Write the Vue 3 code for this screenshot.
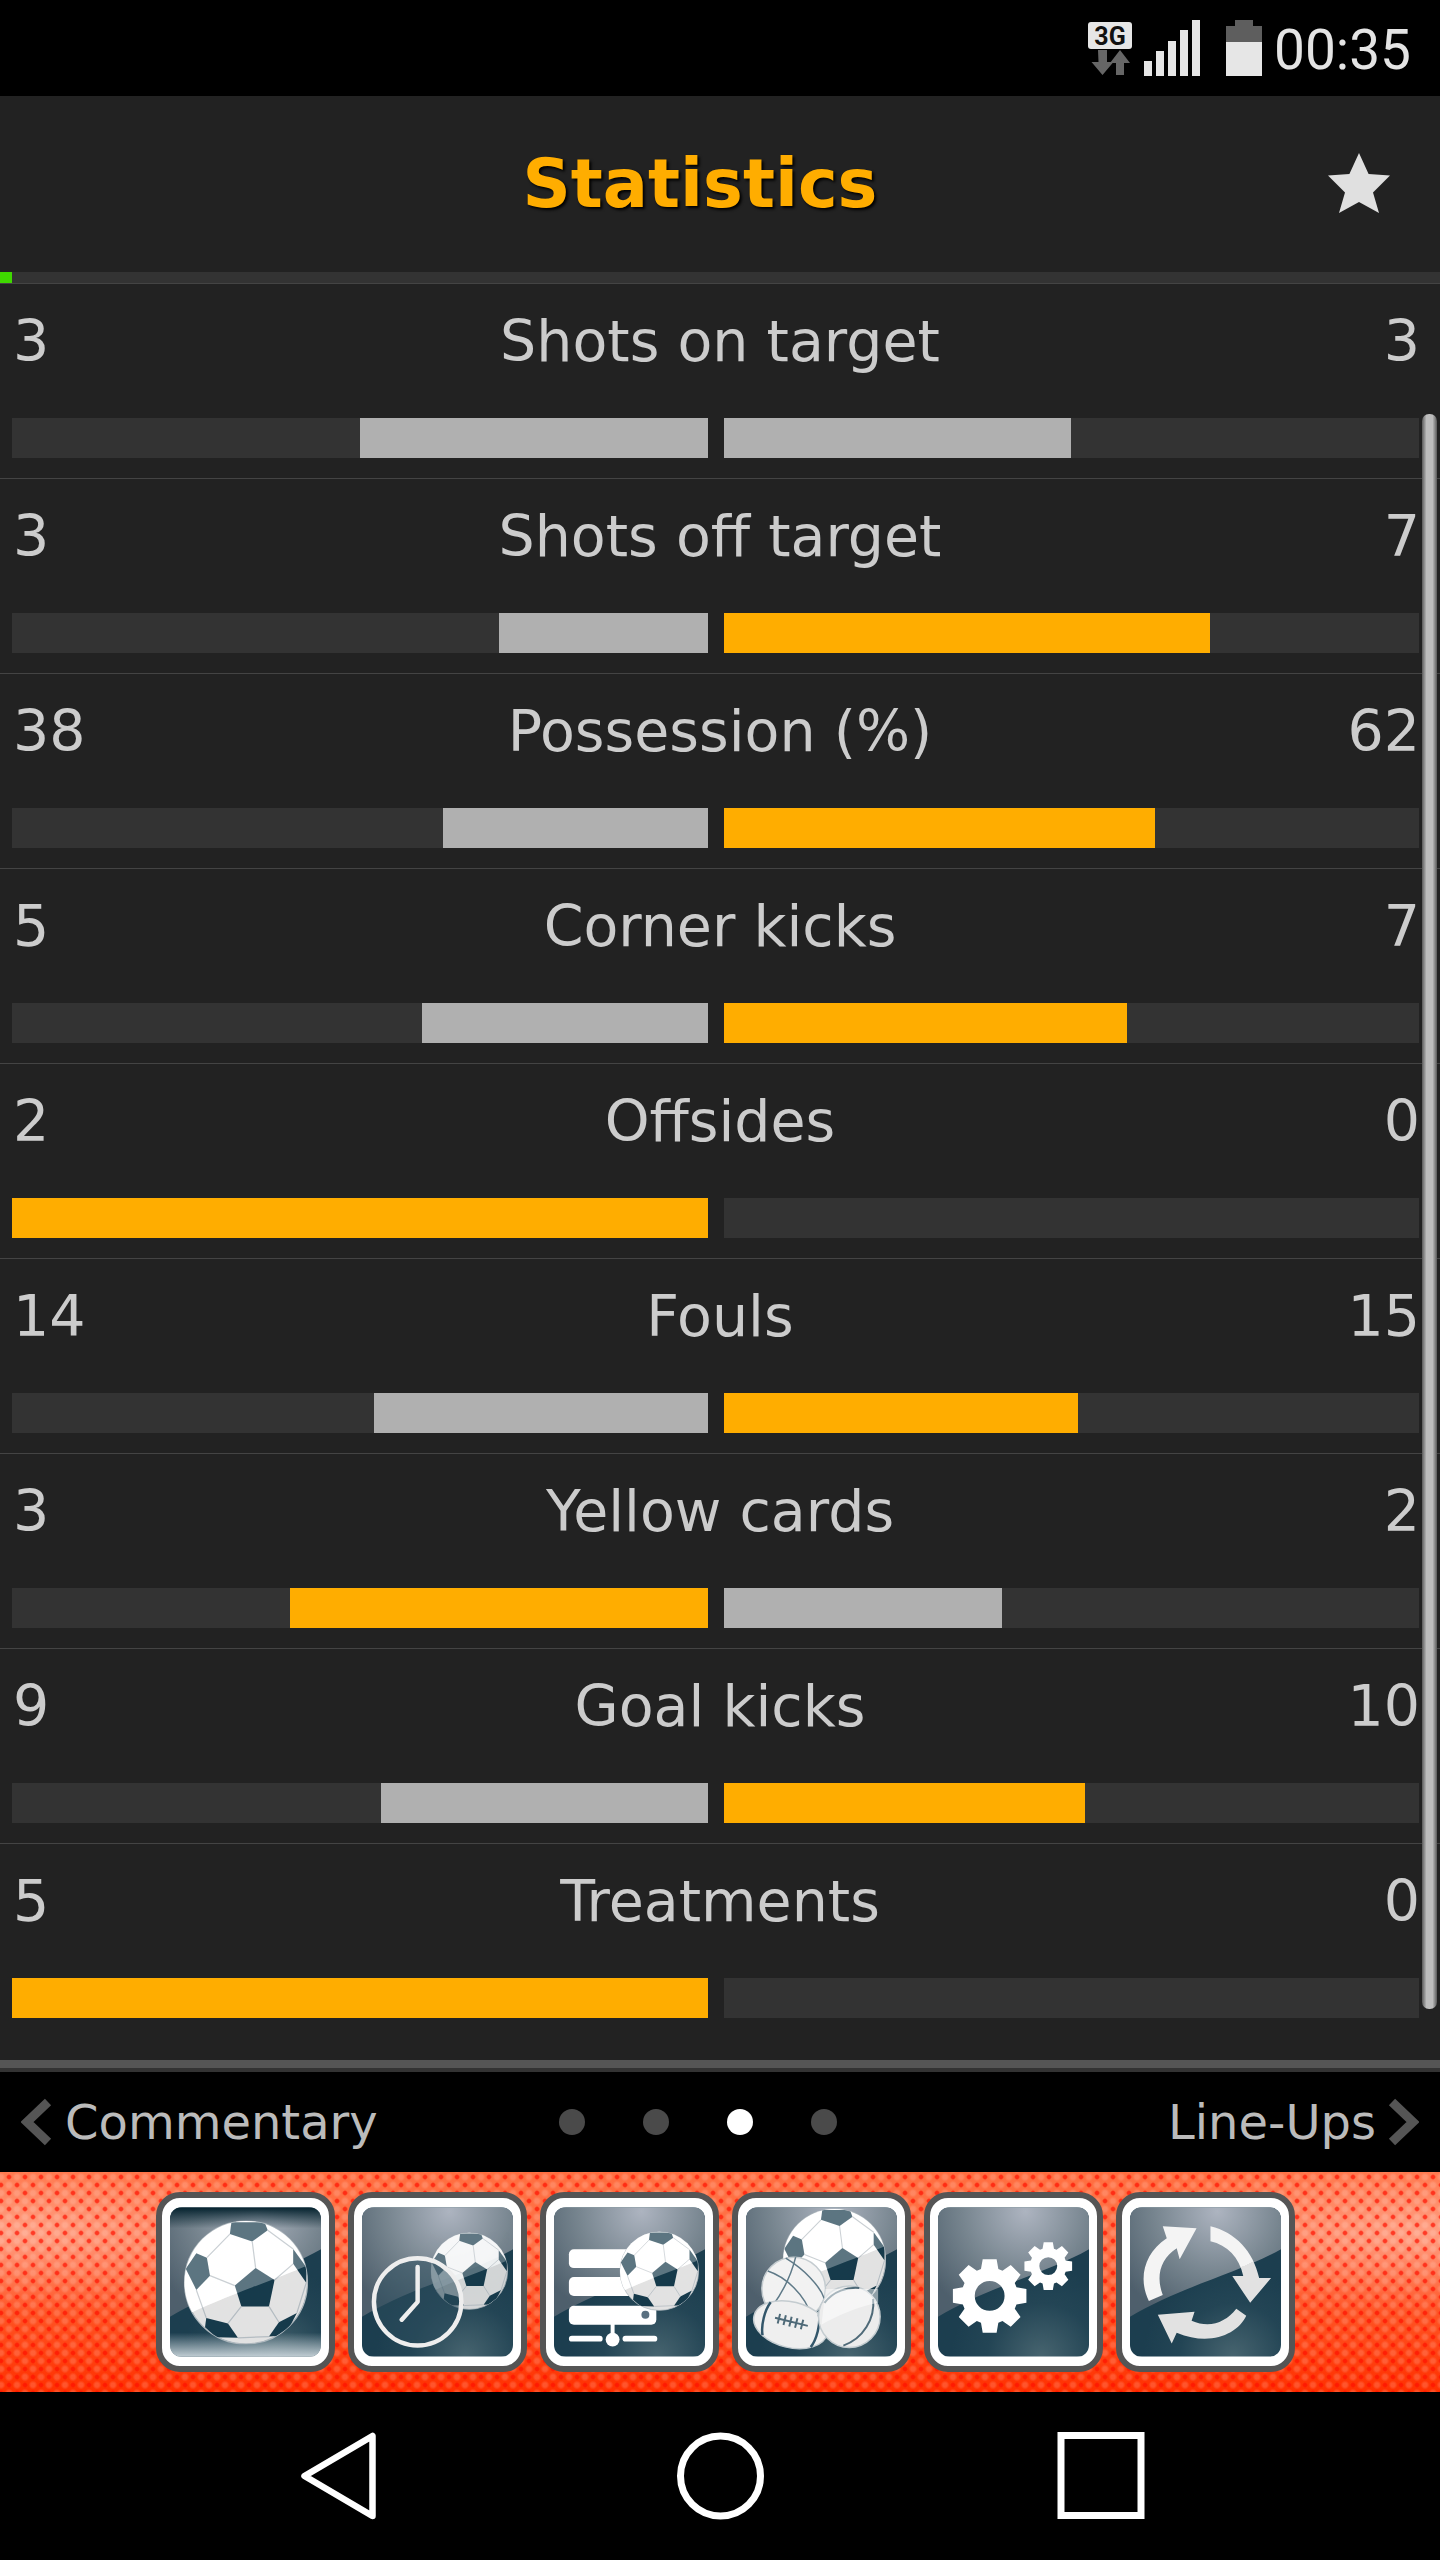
<script setup>
const stats = [
  { label: 'Shots on target', a: 3, b: 3 },
  { label: 'Shots off target', a: 3, b: 7 },
  { label: 'Possession (%)', a: 38, b: 62 },
  { label: 'Corner kicks', a: 5, b: 7 },
  { label: 'Offsides', a: 2, b: 0 },
  { label: 'Fouls', a: 14, b: 15 },
  { label: 'Yellow cards', a: 3, b: 2 },
  { label: 'Goal kicks', a: 9, b: 10 },
  { label: 'Treatments', a: 5, b: 0 }
]
const pct = (v, s) => Math.floor((v / (s.a + s.b)) * 100) + '%'
const cls = (v, o) => (v > o ? 'fill hi' : 'fill lo')
const panels = ['ball', 'clock', 'list', 'balls', 'gears', 'refresh']

function gear(cx, cy, R, r, hole, halfTooth, teeth = 8) {
  let d = ''
  for (let i = 0; i < teeth; i++) {
    const a = (i / teeth) * Math.PI * 2 - Math.PI / 2
    const ca = Math.cos(a)
    const sa = Math.sin(a)
    const pt = (rad, off) => `${(cx + rad * ca - off * sa).toFixed(2)} ${(cy + rad * sa + off * ca).toFixed(2)}`
    d += `${i ? 'L' : 'M'}${pt(r, -halfTooth * 1.25)}L${pt(R, -halfTooth)}L${pt(R, halfTooth)}L${pt(r, halfTooth * 1.25)}`
  }
  d += `Z M${cx - hole} ${cy}a${hole} ${hole} 0 1 0 ${hole * 2} 0a${hole} ${hole} 0 1 0 ${-hole * 2} 0Z`
  return d
}
const bigGear = gear(52, 89, 37, 27, 15, 7)
const smallGear = gear(111, 59, 24, 17.5, 9, 4.6)
</script>

<template>
  <div class="screen">
    <svg class="defs" width="0" height="0" aria-hidden="true">
      <defs>
        <radialGradient id="upperFill" gradientUnits="userSpaceOnUse" cx="88" cy="4" r="115">
          <stop offset="0" stop-color="#adb4c0" />
          <stop offset="0.55" stop-color="#77858f" />
          <stop offset="1" stop-color="#4e5f6c" />
        </radialGradient>
        <radialGradient id="lowerFill" gradientUnits="userSpaceOnUse" cx="104" cy="150" r="90">
          <stop offset="0" stop-color="#47646f" />
          <stop offset="0.6" stop-color="#234555" />
          <stop offset="1" stop-color="#1c3e4f" />
        </radialGradient>
        <linearGradient id="selTop" x1="0" y1="0" x2="0" y2="1">
          <stop offset="0" stop-color="#04222e" />
          <stop offset="0.14" stop-color="#04222e" stop-opacity="0" />
          <stop offset="0.84" stop-color="#c0ccd2" stop-opacity="0" />
          <stop offset="1" stop-color="#c0ccd2" />
        </linearGradient>
        <linearGradient id="split" gradientUnits="userSpaceOnUse" x1="42" y1="0" x2="110" y2="152">
          <stop offset="0.5" stop-color="#f4f4f4" />
          <stop offset="0.5" stop-color="#e2e2e2" />
        </linearGradient>
        <clipPath id="ballClip"><circle cx="0" cy="0" r="99" /></clipPath>
        <symbol id="ball" viewBox="-100 -100 200 200">
          <circle r="99" fill="#e2e2e2" stroke="#aeb8be" stroke-width="2" />
          <g clip-path="url(#ballClip)">
            <path d="M-100 -100H100V-28C40 -2 -50 28 -100 55Z" fill="#fff" />
            <g fill="#163a4b">
              <polygon points="-18,5 15.5,-23.5 46,-4 37,38.5 -7.5,38.5" />
              <polygon points="-23.5,-97 30,-97 35,-84 10,-66 -26,-78" />
              <polygon points="-97,-22 -80,-47 -63,-40 -58,-11 -80,12" />
              <polygon points="76,-30 97,0.5 97,-25 76,-54" />
              <polygon points="-64,57 -29,66 -13,89 -48,88 -66,72" />
              <polygon points="37,87 53,64 82,49 70,72 49,86" />
            </g>
            <g stroke="#b4bcc2" stroke-width="2" fill="none">
              <path d="M-18 5L-58 -11M15.5 -23.5L10 -66M46 -4L76 -30M37 38.5L53 64M-7.5 38.5L-29 66M-26 -78L-63 -40M35 -84L76 -54M-80 12L-64 57M-13 89L37 87M82 49L97 0.5" />
            </g>
            <path d="M-100 -100H100V-28C40 -2 -50 28 -100 55Z" fill="#fff" opacity="0.3" />
          </g>
        </symbol>
      </defs>
    </svg>

    <div class="status">
      <svg class="sicons" width="176" height="96" viewBox="0 0 176 96">
        <rect x="1" y="22" width="44" height="27" rx="3" fill="#e6e6e6" />
        <text x="23" y="45" text-anchor="middle" class="tg">3G</text>
        <path d="M8 50h9v12h6.500l-11 13-11-13h7z" transform="translate(3 0)" fill="#666" />
        <path d="M33 50l10 13h-6v12h-8V63h-6z" fill="#666" />
        <g fill="#e6e6e6">
          <rect x="57" y="61" width="8" height="15" />
          <rect x="69" y="51" width="8" height="25" />
          <rect x="81" y="41" width="8" height="35" />
          <rect x="93" y="30" width="8" height="46" />
          <rect x="105" y="20" width="8" height="56" />
          <rect x="139" y="42" width="36" height="34" />
        </g>
        <path d="M148 20h18v6h9v16h-36V26h9z" fill="#5e5e5e" />
      </svg>
      <span class="clock">00:35</span>
    </div>

    <div class="head">
      <span></span>
      <h1>Statistics</h1>
      <svg class="star" width="62" height="60" viewBox="0 0 62 60">
        <path d="M31 0l9.600 21L62 22.500 45 39.500 51 60 31 49 11 60l6-20.500L0 22.500 21.400 21z" fill="#e0e0e0" />
      </svg>
    </div>
    <div class="prog"><i></i></div>

    <div class="list">
      <div v-for="s in stats" :key="s.label" class="row">
        <div class="nums">
          <span class="na">{{ s.a }}</span>
          <span>{{ s.label }}</span>
          <span class="nb">{{ s.b }}</span>
        </div>
        <div class="bars">
          <div class="track l"><div :class="cls(s.a, s.b)" :style="{ width: pct(s.a, s) }"></div></div>
          <div class="track"><div :class="cls(s.b, s.a)" :style="{ width: pct(s.b, s) }"></div></div>
        </div>
      </div>
      <div class="scroll"></div>
    </div>
    <div class="rule"></div>

    <div class="pager">
      <div class="pleft">
        <svg width="31" height="48" viewBox="0 0 31 48"><path d="M27 4L6 24l21 20" fill="none" stroke="#555" stroke-width="9" /></svg>
        <span>Commentary</span>
      </div>
      <div class="dots"><i></i><i></i><i class="on"></i><i></i></div>
      <div class="pright">
        <span>Line-Ups</span>
        <svg width="31" height="48" viewBox="0 0 31 48"><path d="M4 4l21 20L4 44" fill="none" stroke="#555" stroke-width="9" /></svg>
      </div>
    </div>

    <div class="dock">
      <div v-for="p in panels" :key="p" class="btn">
        <svg class="panel" width="151" height="150" viewBox="0 0 152 150">
          <rect width="152" height="150" fill="url(#lowerFill)" />
          <path d="M0 0H152V42C110 66 50 80 0 110Z" fill="url(#upperFill)" />

          <template v-if="p === 'ball'">
            <rect width="152" height="150" fill="url(#selTop)" />
            <use href="#ball" x="14" y="13" width="125" height="125" />
          </template>

          <template v-else-if="p === 'clock'">
            <use href="#ball" x="69" y="25" width="78" height="78" opacity="0.92" />
            <circle cx="56" cy="95" r="44" fill="#2c4c5c" fill-opacity="0.55" stroke="#eee" stroke-width="4.500" />
            <path d="M56 60V95L40 113" fill="none" stroke="#eee" stroke-width="4.500" stroke-linecap="round" stroke-linejoin="round" />
          </template>

          <template v-else-if="p === 'list'">
            <g fill="#fff">
              <rect x="15" y="42" width="80" height="19" rx="5" />
              <rect x="15" y="70" width="80" height="19" rx="5" />
              <rect x="15" y="99" width="88" height="19" rx="5" />
              <rect x="57" y="116" width="4" height="14" />
              <circle cx="59" cy="133" r="7" />
              <rect x="15" y="129" width="34" height="6" rx="3" />
              <rect x="69" y="129" width="35" height="6" rx="3" />
            </g>
            <circle cx="92" cy="108" r="4" fill="#5a7080" />
            <use href="#ball" x="66" y="24" width="80" height="80" />
          </template>

          <template v-else-if="p === 'balls'">
            <use href="#ball" x="37" y="1" width="104" height="104" />
            <circle cx="48" cy="82" r="32" fill="#f2f2f2" stroke="#c4ccd0" stroke-width="1.500" />
            <g fill="none" stroke="#5f7a88" stroke-width="1.500">
              <path d="M22 64C40 70 60 88 66 110" />
              <path d="M40 51C58 62 74 78 79 92" />
              <path d="M26 100C38 84 46 66 50 50" />
            </g>
            <g transform="rotate(14 45 118)">
              <ellipse cx="45" cy="118" rx="38" ry="23" fill="#efefef" stroke="#c4ccd0" stroke-width="1.500" />
              <path d="M20 101C16 110 16 126 20 135M70 101C74 110 74 126 70 135" fill="none" stroke="#33566a" stroke-width="2.500" />
              <path d="M28 115H62M32 110V120M38 110V120M44 110V120M50 110V120M56 110V120" fill="none" stroke="#4f6a78" stroke-width="2" />
            </g>
            <circle cx="104" cy="110" r="31" fill="#ececec" stroke="#c4ccd0" stroke-width="1.500" />
            <path d="M79 96C88 84 102 80 114 81M128 92C130 112 118 132 98 139" fill="none" stroke="#4f6a78" stroke-width="2" />
            <path d="M76 118C90 110 112 100 133 96V82H80Z" fill="#fff" opacity="0.5" />
          </template>

          <template v-else-if="p === 'gears'">
            <path :d="bigGear" fill="#fff" fill-rule="evenodd" />
            <path :d="smallGear" fill="#fff" fill-rule="evenodd" />
          </template>

          <template v-else>
            <g fill="url(#split)">
              <path d="M19 94C8 72 14 46 37 31L33 19L67 21L50 52L47 41C30 52 26 70 33 88Z" />
              <path d="M81 19C106 25 124 44 130 71H142L121 96L103 69H114C110 50 98 38 81 34Z" />
              <path d="M117 109C108 128 80 140 47 126L42 137L28 108L65 105L62 114C80 122 96 116 107 102Z" />
            </g>
          </template>
        </svg>
      </div>
    </div>

    <div class="nav">
      <svg width="1440" height="168" viewBox="0 0 1440 168">
        <path d="M372.500 44V124L304.500 84Z" fill="none" stroke="#fff" stroke-width="6.500" stroke-linejoin="round" />
        <circle cx="720.500" cy="84" r="40" fill="none" stroke="#fff" stroke-width="7" />
        <rect x="1061" y="43.500" width="80" height="80" fill="none" stroke="#fff" stroke-width="7" />
      </svg>
    </div>
  </div>
</template>

<style>
body { background: #000; }
</style>
<style scoped>
.screen { position: relative; width: 1440px; height: 2560px; background: #222; font-family: "DejaVu Sans", sans-serif; color: #ccc; display: flex; flex-direction: column; overflow: hidden; }
.defs { position: absolute; }
.status { height: 96px; flex: none; background: #000; display: flex; justify-content: flex-end; align-items: center; padding-right: 29px; gap: 11px; }
.tg { font: bold 25px Roboto, sans-serif; fill: #111; }
.clock { font: 55px Roboto, sans-serif; color: #e4e4e4; line-height: 96px; padding-top: 3px; }
.head { height: 176px; flex: none; display: grid; grid-template-columns: 1fr auto 1fr; align-items: center; padding-right: 40px; }
h1 { margin: 0; font: bold 67px "DejaVu Sans", sans-serif; color: #ffad00; text-shadow: 2px 2px 3px #000; }
.star { justify-self: end; margin-right: 10px; margin-top: -2px; }
.prog { height: 11px; flex: none; background: #333; border-bottom: 1px solid #444; }
.prog i { display: block; width: 12px; height: 11px; background: #3fd800; }
.list { position: relative; flex: none; margin-bottom: 21px; }
.row { height: 195px; box-sizing: border-box; border-bottom: 1px solid #444; }
.row:nth-last-child(2) { border-bottom: 0; }
.nums { height: 114px; display: grid; grid-template-columns: 1fr auto 1fr; align-items: center; font-size: 57px; padding: 0 23px; }
.na { margin-left: -10px; }
.nb { justify-self: end; margin-right: -3px; }
.bars { display: flex; gap: 16px; margin: 20px 21px 0 12px; }
.track { flex: 1; height: 40px; background: #333; }
.track.l { display: flex; justify-content: flex-end; }
.fill { height: 40px; }
.hi { background: #ffad00; }
.lo { background: #b0b0b0; }
.scroll { position: absolute; top: 130px; right: 3px; width: 15px; height: 1595px; border-radius: 7px; background: linear-gradient(90deg, #5a5a5a, #bdbdbd 30%, #bdbdbd 70%, #5a5a5a); }
.rule { height: 8px; flex: none; background: #555; border-bottom: 4px solid #333; }
.pager { height: 100px; flex: none; background: #000; display: flex; align-items: center; padding: 0 21px; font-size: 48px; color: #bbb; }
.pleft { flex: 0 0 538px; display: flex; align-items: center; gap: 13px; }
.pright { flex: 1; display: flex; align-items: center; justify-content: flex-end; gap: 12px; }
.dots { display: flex; gap: 58px; }
.dots i { width: 26px; height: 26px; border-radius: 50%; background: #4a4a4a; }
.dots i.on { background: #fff; }
.dock {
  height: 220px; flex: none; box-sizing: border-box; padding: 20px 0 0 156px; display: flex; gap: 13px; align-items: flex-start;
  background-image:
    radial-gradient(circle at 4px 4px, rgba(255, 16, 0, 0.7) 1.5px, rgba(255, 16, 0, 0) 3px),
    radial-gradient(circle at 12px 12px, rgba(255, 16, 0, 0.7) 1.5px, rgba(255, 16, 0, 0) 3px),
    radial-gradient(circle at 12px 4px, rgba(255, 255, 255, 0.16) 2px, rgba(255, 255, 255, 0) 4.5px),
    radial-gradient(circle at 4px 12px, rgba(255, 255, 255, 0.16) 2px, rgba(255, 255, 255, 0) 4.5px),
    radial-gradient(ellipse 280px 80px at 20px 60px, rgba(255, 255, 255, 0.32), rgba(255, 255, 255, 0)),
    radial-gradient(ellipse 280px 80px at 1420px 60px, rgba(255, 255, 255, 0.32), rgba(255, 255, 255, 0)),
    linear-gradient(180deg, #ff6e40 0, #ff7248 30%, #ff4e1e 70%, #ff3000 100%);
  background-size: 16px 16px, 16px 16px, 16px 16px, 16px 16px, 100% 100%, 100% 100%, 100% 100%;
  background-position: 5px 1px, 5px 1px, 5px 1px, 5px 1px, 0 0, 0 0, 0 0;
}
.btn { width: 179px; height: 180px; box-sizing: border-box; flex: none; border: 6px solid #555; border-radius: 24px; background: #fff; padding: 9px 8px; }
.panel { display: block; border-radius: 12px; }
.nav { flex: 1; background: #000; }
.nav svg { display: block; }
</style>
